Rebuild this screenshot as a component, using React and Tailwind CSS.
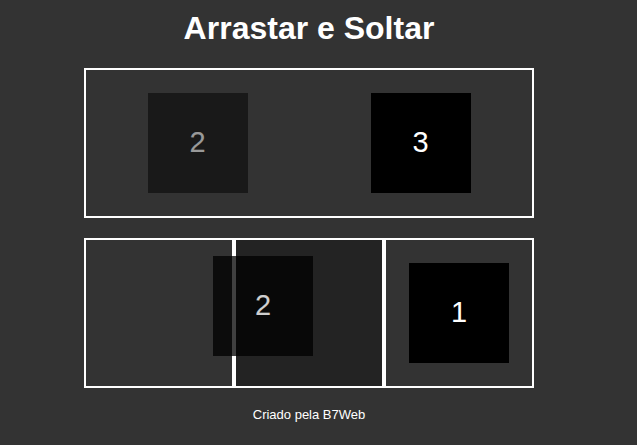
const Item = ({ label, faded }) => (
  <div
    className={`w-[100px] h-[100px] bg-black flex items-center justify-center text-white text-[29px] ${
      faded ? 'opacity-50' : ''
    }`}
  >
    {label}
  </div>
)

const Area = ({ children, over }) => (
  <div
    className={`w-[150px] h-[150px] border-2 border-white flex items-center justify-center ${
      over ? 'bg-[#232323]' : ''
    }`}
  >
    {children}
  </div>
)

export default function App() {
  return (
    <div className="min-h-screen bg-[#333333] font-['Liberation_Sans',Arial,sans-serif]">
      <div className="w-[618px] flex flex-col items-center">
        <h1 className="mt-[10px] mb-[21px] text-[32px] leading-[37px] font-bold text-white">
          Arrastar e Soltar
        </h1>

        {/* Neutral area */}
        <div className="w-[450px] h-[150px] border-2 border-white flex items-center justify-around">
          <Item label="2" faded />
          <Item label="3" />
        </div>

        {/* Drop areas */}
        <div className="relative mt-[20px] flex">
          <Area />
          <Area over />
          <Area>
            <Item label="1" />
          </Area>

          {/* Drag ghost */}
          <div className="absolute left-[129px] top-[18px] w-[100px] h-[100px] bg-black/75 flex items-center justify-center text-[29px] text-white/80">
            2
          </div>
        </div>

        <footer className="mt-[19px] text-[13px] leading-[15px] text-white">
          Criado pela B7Web
        </footer>
      </div>
    </div>
  )
}
